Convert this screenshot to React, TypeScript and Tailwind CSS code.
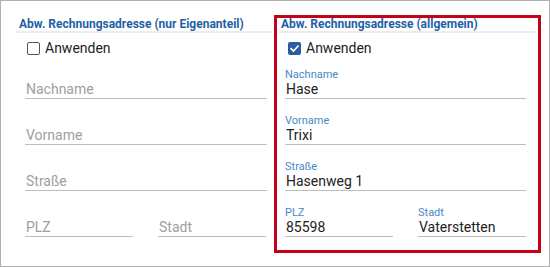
import React from "react";

const Field = ({ label, value, filled, className = "" }: { label: string; value: string; filled: boolean; className?: string }) => {
  return (
    <div className={"border-b border-[#bdbdbd] " + className}>
      <div className={"h-[13px] text-[11px] leading-[13px] " + (filled ? "text-[#4a87c9]" : "text-transparent")}>
        {filled ? label : ""}
      </div>
      <div className={"h-[17px] text-[14px] leading-[17px] pl-px " + (filled ? "text-[#222]" : "text-[#9e9e9e]")}>
        {filled ? value : label}
      </div>
    </div>
  );
};

const Checkbox = ({ checked }: { checked: boolean }) => {
  if (checked) {
    return (
      <span className="w-[13px] h-[13px] rounded-[2px] bg-[#2b5c9c] flex items-center justify-center">
        <svg viewBox="0 0 12 12" className="w-[11px] h-[11px]" fill="none" stroke="white" strokeWidth="1.8" strokeLinecap="square">
          <path d="M2.3 6.2 L4.9 8.7 L9.8 3.4" />
        </svg>
      </span>
    );
  }
  return <span className="w-[13px] h-[13px] rounded-[2px] border-[1.5px] border-[#555] bg-white" />;
};

const Section = ({ title, checked, data }: { title: string; checked: boolean; data: Record<string, string> }) => {
  const filled = checked;
  return (
    <div className="flex flex-col">
      <div className="text-[12px] font-bold leading-[13px] text-[#1f5fa6] pl-[3px] border-b-2 border-[#ececec] whitespace-nowrap">
        {title}
      </div>
      <div className={"flex items-center gap-[5px] mt-[8px] h-[14px] " + (checked ? "pl-[10px]" : "pl-[11px]")}>
        <Checkbox checked={checked} />
        <span className="text-[14px] text-[#222] leading-[14px]">Anwenden</span>
      </div>
      <div className={"flex flex-col gap-[15px] mt-[13px] " + (checked ? "pl-[7px] pr-[9px]" : "pl-[9px] pr-[5px]")}>
        <Field label="Nachname" value={data.nachname} filled={filled} />
        <Field label="Vorname" value={data.vorname} filled={filled} />
        <Field label="Straße" value={data.strasse} filled={filled} />
        <div className="flex gap-[25px]">
          <Field label="PLZ" value={data.plz} filled={filled} className="w-[108px]" />
          <Field label="Stadt" value={data.stadt} filled={filled} className="w-[108px]" />
        </div>
      </div>
    </div>
  );
};

export default function App() {
  return (
    <div className="w-[550px] h-[267px] bg-white border border-[#b0b0b0] font-['Roboto',sans-serif] flex">
      <div className="w-[256px] ml-[15px] mt-[17px]">
        <Section
          title="Abw. Rechnungsadresse (nur Eigenanteil)"
          checked={false}
          data={{ nachname: "", vorname: "", strasse: "", plz: "", stadt: "" }}
        />
      </div>
      <div className="ml-[2px] mt-[14px] w-[267px] h-[238px] border-[3px] border-[#c4001a]">
        <div className="pl-px pr-[3px]">
          <Section
            title="Abw. Rechnungsadresse (allgemein)"
            checked={true}
            data={{ nachname: "Hase", vorname: "Trixi", strasse: "Hasenweg 1", plz: "85598", stadt: "Vaterstetten" }}
          />
        </div>
      </div>
    </div>
  );
}
